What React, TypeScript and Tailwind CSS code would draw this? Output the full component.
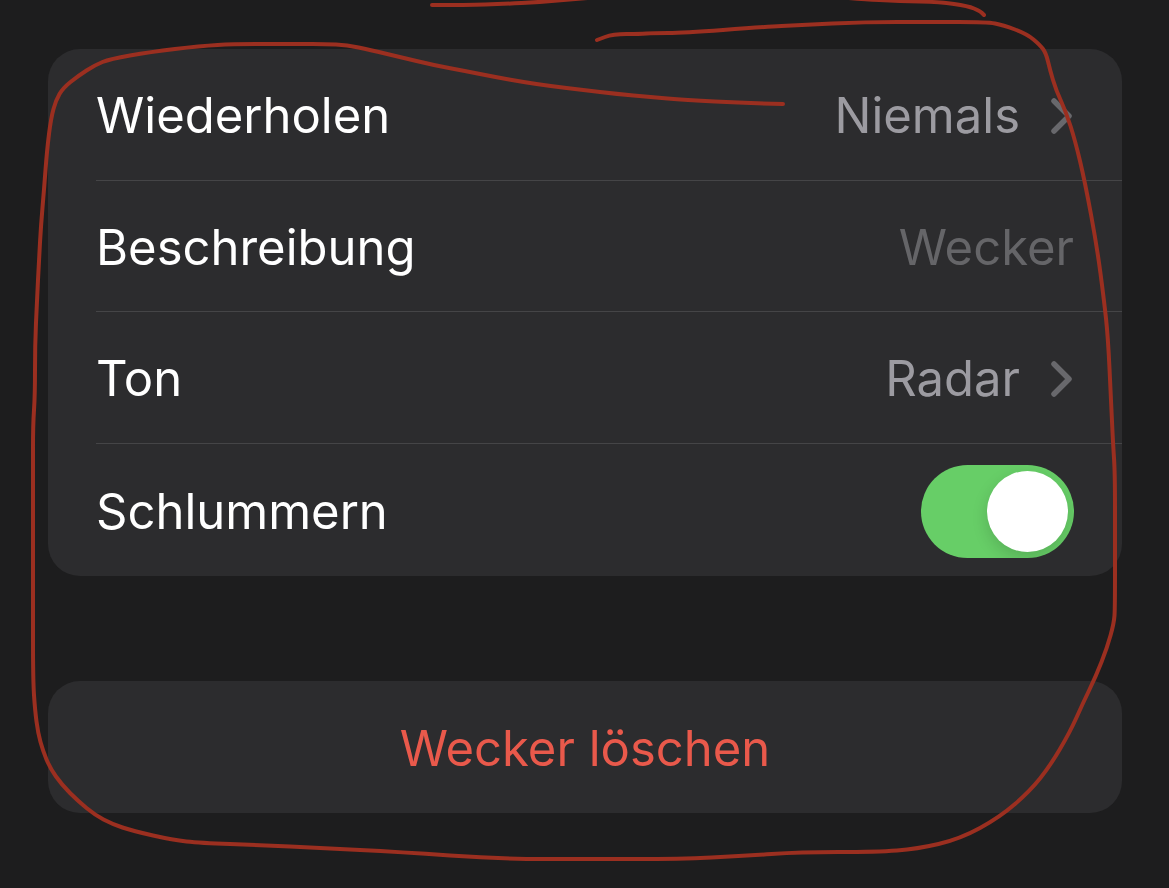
import React, { useState } from 'react';

type Point = [number, number];

// Freehand pen marks, drawn on top of the settings list
const strokes: Point[][] = [
  [
    [783, 104], [745, 103], [685, 100], [650, 97], [617, 94], [583, 90], [550, 86], [523, 82],
    [495, 77], [465, 71], [433, 65], [400, 57], [370, 50], [347, 45], [325, 44], [300, 44],
    [235, 44], [200, 46], [150, 52], [110, 59], [95, 65], [78, 76], [63, 88], [56, 100],
    [51, 118], [47, 150], [44, 190], [41, 225], [39, 260], [37, 300], [35, 345], [35, 395],
    [33, 425], [33, 470], [33, 600], [33, 680], [35, 710], [38, 733], [43, 751], [50, 768],
    [62, 785], [78, 801], [95, 815], [112, 824], [133, 831], [173, 840], [200, 843], [260, 845],
    [320, 848], [400, 852], [500, 859], [590, 859], [680, 859], [743, 856], [800, 852], [877, 852],
    [917, 849], [960, 839], [1000, 817], [1030, 791], [1050, 766], [1070, 732], [1083, 703],
    [1096, 676], [1107, 648], [1114, 623], [1115, 608], [1115, 540], [1115, 473], [1113, 443],
    [1111, 400], [1108, 337], [1104, 300], [1097, 247], [1085, 182], [1075, 140], [1066, 112],
    [1056, 90], [1050, 70], [1046, 53], [1040, 45], [1027, 34], [1003, 25], [987, 22], [930, 22],
    [865, 22], [800, 25], [763, 27], [683, 33], [653, 33], [640, 34], [613, 34], [597, 40],
  ],
  [
    [432, 5], [467, 5], [503, 4], [540, 2], [575, -1], [660, -8], [780, -8], [858, -1],
    [900, 1], [940, 2], [968, 6], [980, 11], [984, 15],
  ],
];

// Quadratic curves through the midpoints of neighbouring points
function toPath(points: Point[]) {
  let d = `M${points[0][0]} ${points[0][1]}`;
  for (let i = 1; i < points.length - 1; i++) {
    const [x, y] = points[i];
    const [nx, ny] = points[i + 1];
    d += ` Q${x} ${y} ${(x + nx) / 2} ${(y + ny) / 2}`;
  }
  const last = points[points.length - 1];
  return `${d} L${last[0]} ${last[1]}`;
}

function Chevron() {
  return (
    <svg viewBox="0 0 24 38" className="w-6 h-[38px] shrink-0" fill="none" aria-hidden="true">
      <path d="M4 4L19 19L4 34" stroke="#68686c" strokeWidth="5.5" strokeLinecap="round" strokeLinejoin="round" />
    </svg>
  );
}

function LinkRow({ label, value }: { label: string; value: string }) {
  return (
    <button type="button" className="flex w-full h-[132px] items-center justify-between pt-[3px] pr-12 text-left">
      <span>{label}</span>
      <span className="flex items-center gap-[30px] text-[#9c9ba1]">
        {value}
        <Chevron />
      </span>
    </button>
  );
}

export default function App() {
  const [description, setDescription] = useState('');
  const [snooze, setSnooze] = useState(true);

  return (
    <main className="relative min-h-screen overflow-hidden bg-[#1d1d1e] pl-12 pr-[47px] pt-[49px] font-['Inter',sans-serif] text-[49px] leading-[60px] text-white">
      <section className="rounded-[32px] bg-[#2c2c2e] pl-12">
        <div className="divide-y divide-[#454547]">
          <LinkRow label="Wiederholen" value="Niemals" />

          <div className="flex h-[131px] items-center justify-between pt-[3px] pr-12">
            <label htmlFor="description">Beschreibung</label>
            <input
              id="description"
              type="text"
              placeholder="Wecker"
              value={description}
              onChange={(e) => setDescription(e.target.value)}
              className="min-w-0 flex-1 bg-transparent text-right text-[#9c9ba1] outline-none placeholder:text-[#656568]"
            />
          </div>

          <LinkRow label="Ton" value="Radar" />

          <div className="flex h-[132px] items-center justify-between pt-[3px] pr-12">
            <label htmlFor="snooze">Schlummern</label>
            <input
              id="snooze"
              type="checkbox"
              role="switch"
              checked={snooze}
              onChange={(e) => setSnooze(e.target.checked)}
              className="flex h-[93px] w-[153px] shrink-0 cursor-pointer appearance-none items-center overflow-hidden rounded-full bg-[#39393d] p-[6px] before:size-[81px] before:rounded-full before:bg-white before:shadow-[0_6px_16px_rgba(0,0,0,0.15)] checked:justify-end checked:bg-[#67ce67]"
            />
          </div>
        </div>
      </section>

      <button
        type="button"
        className="mt-[105px] h-[132px] w-full rounded-[32px] bg-[#2c2c2e] pt-[3px] text-center text-[#e9594b]"
      >
        Wecker löschen
      </button>

      <svg
        viewBox="0 0 1169 888"
        className="pointer-events-none absolute inset-x-0 top-0 w-full"
        fill="none"
        stroke="#9b2f20"
        strokeWidth="4"
        strokeLinecap="round"
        strokeLinejoin="round"
        aria-hidden="true"
      >
        {strokes.map((points, i) => (
          <path key={i} d={toPath(points)} />
        ))}
      </svg>
    </main>
  );
}
